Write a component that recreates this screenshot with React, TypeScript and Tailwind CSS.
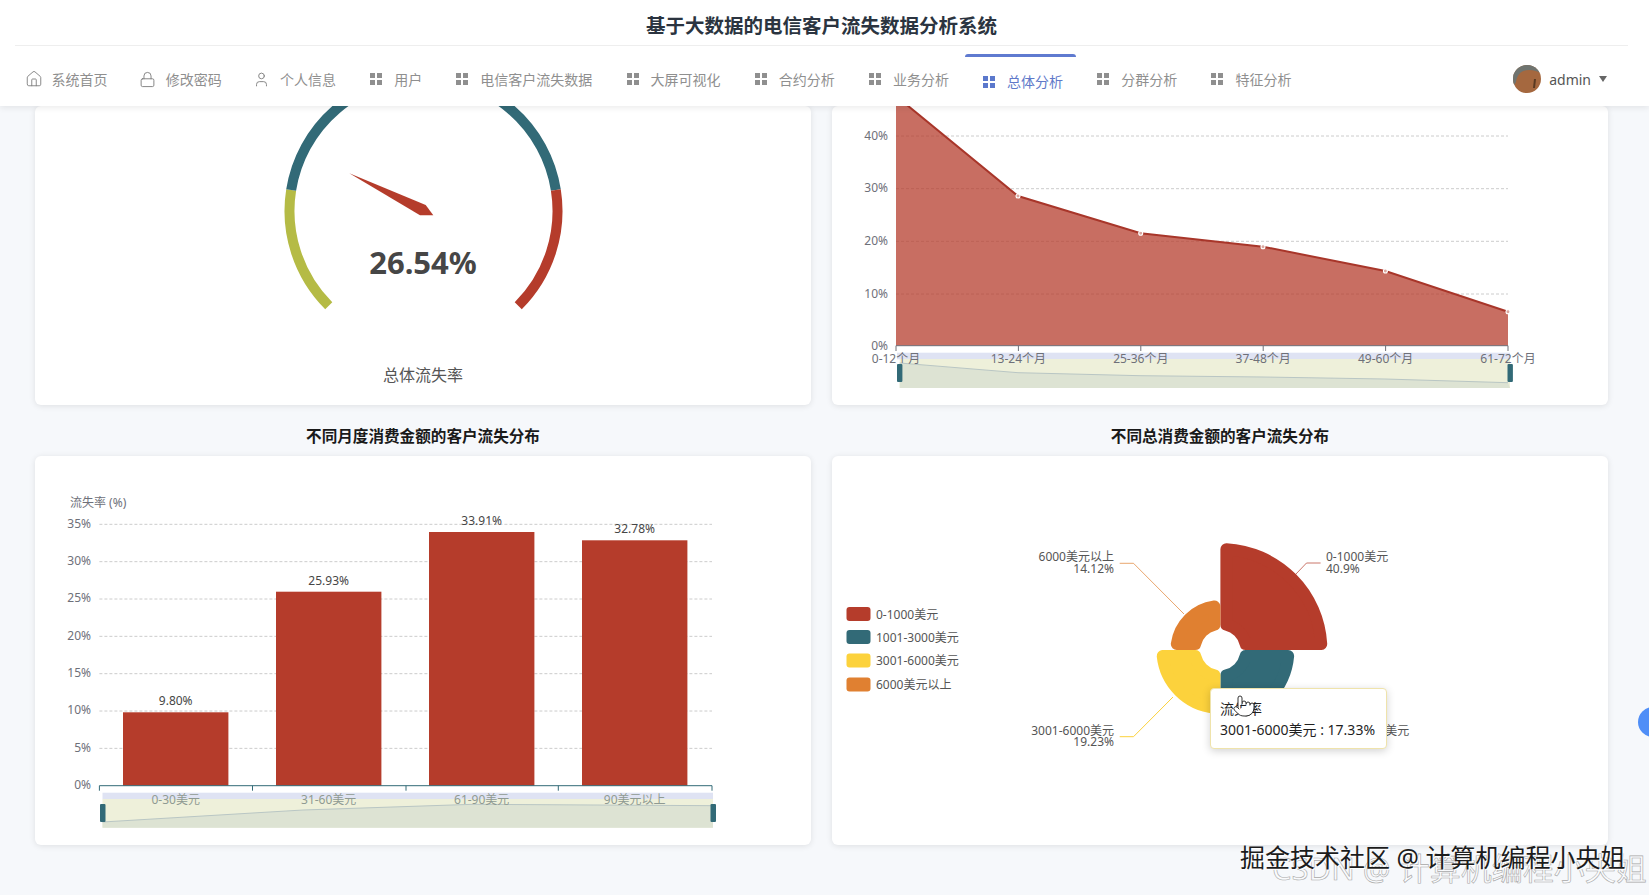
import { Home, Lock, Pointer, User } from "lucide-react";

const FONT = "font-['Noto_Sans','Noto_Sans_CJK_SC',sans-serif]";
const RED = "#b53c2b";
const TEAL = "#326a77";
const YELLOW = "#fcd23c";
const ORANGE = "#e08031";

function GridIcon({ color = "#8f8f8f" }: { color?: string }) {
  return (
    <svg width="12" height="12" viewBox="0 0 12 12" fill={color}>
      <rect x="0" y="0" width="5" height="5" />
      <rect x="7" y="0" width="5" height="5" />
      <rect x="0" y="7" width="5" height="5" />
      <rect x="7" y="7" width="5" height="5" />
    </svg>
  );
}

const navItems = [
  { label: "系统首页", icon: "home" },
  { label: "修改密码", icon: "lock" },
  { label: "个人信息", icon: "user" },
  { label: "用户", icon: "grid" },
  { label: "电信客户流失数据", icon: "grid" },
  { label: "大屏可视化", icon: "grid" },
  { label: "合约分析", icon: "grid" },
  { label: "业务分析", icon: "grid" },
  { label: "总体分析", icon: "grid", active: true },
  { label: "分群分析", icon: "grid" },
  { label: "特征分析", icon: "grid" },
];

function NavIcon({ icon, active }: { icon: string; active?: boolean }) {
  if (icon === "home") return <Home size={18} strokeWidth={1.2} color="#7d7d7d" className="shrink-0" />;
  if (icon === "lock") return <Lock size={17} strokeWidth={1.3} color="#7d7d7d" className="shrink-0" />;
  if (icon === "user") return <User size={17} strokeWidth={1.3} color="#7d7d7d" className="shrink-0" />;
  return <GridIcon color={active ? "#5b78cc" : "#8f8f8f"} />;
}

function Header() {
  return (
    <header className="relative z-10 h-[106px] shrink-0 bg-white shadow-[0_2px_6px_rgba(0,0,0,0.08)]">
      <div className="ml-[15px] mr-[21px] flex h-[46px] items-center justify-center border-b border-[#eeeeee] pt-[6px]">
        <h1 className="text-[19.5px] font-bold text-[#2b3440]">基于大数据的电信客户流失数据分析系统</h1>
      </div>
      <nav className="flex h-[60px] pl-[10px] pr-[42px] pt-[8px]">
        {navItems.map((item) => (
          <div
            key={item.label}
            className={`relative flex h-[52px] items-center px-[16.6px] text-[14px] ${
              item.active ? "pt-[3px] text-[#6079c9]" : "pb-[2px] text-[#8f8f8f]"
            }`}
          >
            {item.active && <span className="absolute left-[-1px] top-0 h-[3px] w-[111px] rounded-t-[3px] bg-[#5f7ad0]" />}
            <span className="mr-[11px] flex w-[14px] items-center justify-center">
              <NavIcon icon={item.icon} active={item.active} />
            </span>
            <span>{item.label}</span>
          </div>
        ))}
        <div className="ml-auto flex h-[52px] items-center pb-[2px] text-[14px] text-[#555555]">
          <svg width="28" height="28" viewBox="0 0 28 28" className="mr-[8px]">
            <defs>
              <clipPath id="av">
                <circle cx="14" cy="14" r="14" />
              </clipPath>
            </defs>
            <g clipPath="url(#av)">
              <rect width="28" height="28" fill="#a5683f" />
              <path d="M0 0h28v9c-3-3-7-4-12-4C9 5 4 9 3 17L0 22z" fill="#6f7470" />
              <path d="M21 14l2 0-1 9-2 0z" fill="#5a3a22" />
            </g>
          </svg>
          <span>admin</span>
          <span className="ml-[8px] h-0 w-0 border-x-[4px] border-t-[6px] border-x-transparent border-t-[#666666]" />
        </div>
      </nav>
    </header>
  );
}

function polar(cx: number, cy: number, r: number, deg: number) {
  const a = (deg * Math.PI) / 180;
  return [cx + r * Math.cos(a), cy - r * Math.sin(a)];
}
function arc(cx: number, cy: number, r: number, a1: number, a2: number) {
  const [x1, y1] = polar(cx, cy, r, a1);
  const [x2, y2] = polar(cx, cy, r, a2);
  return `M${x1} ${y1}A${r} ${r} 0 0 1 ${x2} ${y2}`;
}

function Gauge() {
  const cx = 423.5;
  const cy = 211;
  const r = 134;
  return (
    <svg width="776" height="299" viewBox="35 106 776 299" className="block">
      <path d={arc(cx, cy, r, 225, 171)} fill="none" stroke="#b5bb45" strokeWidth="10" />
      <path d={arc(cx, cy, r, 171, 9)} fill="none" stroke={TEAL} strokeWidth="10" />
      <path d={arc(cx, cy, r, 9, -45)} fill="none" stroke={RED} strokeWidth="10" />
      <polygon points="349.3,173.3 425.7,205 433.3,215.3 420,215.3" fill={RED} />
      <text x="423" y="274" textAnchor="middle" className="fill-[#464646] text-[31px] font-bold">
        26.54%
      </text>
      <text x="423" y="381" textAnchor="middle" className="fill-[#555555] text-[16px]">
        总体流失率
      </text>
    </svg>
  );
}

function LineChart() {
  const ticks = [896, 1018.4, 1140.8, 1263.2, 1385.6, 1508];
  const pts = [
    [896, 96],
    [1018, 196],
    [1140.7, 233.3],
    [1263, 246.7],
    [1385.4, 271],
    [1508, 311.7],
  ];
  const line = pts.map((p) => p.join(",")).join(" ");
  const mini = "899.7,363 1018,372.7 1140,375.7 1263,377 1385,379 1508,382.7";
  const labels = ["0-12个月", "13-24个月", "25-36个月", "37-48个月", "49-60个月", "61-72个月"];
  return (
    <svg width="776" height="299" viewBox="832 106 776 299" className="block">
      {[
        [135.5, "40%"],
        [188.2, "30%"],
        [240.8, "20%"],
        [293.5, "10%"],
      ].map(([y, t]) => (
        <g key={t as string}>
          <line x1="896" x2="1508" y1={(y as number) + 0.5} y2={(y as number) + 0.5} stroke="#cccccc" strokeDasharray="3 2" />
          <text x="888" y={(y as number) + 4} textAnchor="end" className="fill-[#6e7079] text-[12px]">
            {t}
          </text>
        </g>
      ))}
      <text x="888" y="349.5" textAnchor="end" className="fill-[#6e7079] text-[12px]">
        0%
      </text>
      <polygon points={`${line} 1508,345.7 896,345.7`} fill={RED} fillOpacity="0.74" />
      <polyline points={line} fill="none" stroke="#a8362a" strokeWidth="2" />
      {pts.slice(1).map(([x, y]) => (
        <circle key={x} cx={x} cy={y} r="2" fill="#d9a79f" stroke="#ffffff" strokeWidth="1.1" />
      ))}
      <line x1="896" x2="1508" y1="345.7" y2="345.7" stroke="#6e7079" />
      {ticks.map((x) => (
        <line key={x} x1={x} x2={x} y1="345.7" y2="351" stroke="#6e7079" />
      ))}
      <rect x="897" y="352.7" width="613" height="6.6" fill="#dfe3f3" />
      <rect x="899.7" y="359" width="610.3" height="29" fill="#eef0da" />
      <polygon points={`${mini} 1510,388 899.7,388`} fill="#dde3d3" />
      <polyline points={mini} fill="none" stroke="#b9c6c4" />
      <rect x="897" y="364" width="5.4" height="18" rx="1" fill={TEAL} />
      <rect x="1507.5" y="364" width="5.4" height="18" rx="1" fill={TEAL} />
      {labels.map((t, i) => (
        <text key={t} x={ticks[i]} y="363" textAnchor="middle" className="fill-[#6e7079] text-[12px]">
          {t}
        </text>
      ))}
    </svg>
  );
}

function BarChart() {
  const y0 = 785.7;
  const step = 37.34;
  const bars = [
    { x: 123, top: 712.3, v: "9.80%", ly: 705, t: "0-30美元" },
    { x: 276, top: 591.7, v: "25.93%", ly: 584.5, t: "31-60美元" },
    { x: 429, top: 532, v: "33.91%", ly: 524.5, t: "61-90美元" },
    { x: 582, top: 540.3, v: "32.78%", ly: 533, t: "90美元以上" },
  ];
  const mini = "102.5,822 303,810 473,804.3 713,805.7";
  return (
    <svg width="776" height="389" viewBox="35 456 776 389" className="block">
      <text x="70" y="506.5" className="fill-[#6e7079] text-[12px]">
        流失率 (%)
      </text>
      {[0, 1, 2, 3, 4, 5, 6, 7].map((i) => {
        const y = y0 - i * step;
        return (
          <g key={i}>
            {i > 0 && <line x1="99.4" x2="712" y1={y} y2={y} stroke="#cccccc" strokeDasharray="3 2" />}
            <text x="91" y={y + 3.4} textAnchor="end" className="fill-[#6e7079] text-[12px]">
              {i * 5}%
            </text>
          </g>
        );
      })}
      {bars.map((b) => (
        <g key={b.t}>
          <rect x={b.x} y={b.top} width="105.4" height={y0 - b.top} fill={RED} />
          <text x={b.x + 52.7} y={b.ly} textAnchor="middle" className="fill-[#464646] text-[12px]">
            {b.v}
          </text>
        </g>
      ))}
      <line x1="99.4" x2="712" y1={y0} y2={y0} stroke={TEAL} />
      {[99.4, 252.5, 406, 558.3, 712].map((x) => (
        <line key={x} x1={x} x2={x} y1={y0} y2={y0 + 5} stroke={TEAL} />
      ))}
      <rect x="102.5" y="792.7" width="610.5" height="6.6" fill="#dfe3f3" />
      <rect x="102.5" y="799" width="610.5" height="28.7" fill="#eef0da" />
      <polygon points={`${mini} 713,827.7 102.5,827.7`} fill="#dde3d3" />
      <polyline points={mini} fill="none" stroke="#b9c6c4" />
      <rect x="100" y="804" width="5.5" height="18" rx="1" fill={TEAL} />
      <rect x="710.5" y="804" width="5.5" height="18" rx="1" fill={TEAL} />
      {bars.map((b) => (
        <text key={b.t} x={b.x + 52.7} y="803.5" textAnchor="middle" className="fill-[#8f9a92] text-[12px]">
          {b.t}
        </text>
      ))}
    </svg>
  );
}

function quad(R: number, r: number, c: number) {
  const a = Math.sqrt((R - c) ** 2 - c ** 2);
  const b = Math.sqrt((r + c) ** 2 - c ** 2);
  return `M${c} ${-a}A${R - c} ${R - c} 0 0 1 ${a} ${-c}L${b} ${-c}A${r + c} ${r + c} 0 0 0 ${c} ${-b}Z`;
}

function RoseChart() {
  const sectors = [
    { R: 107, color: RED, k: 0 },
    { R: 74, color: TEAL, k: 1 },
    { R: 64, color: YELLOW, k: 2 },
    { R: 50, color: ORANGE, k: 3 },
  ];
  const legend = [
    { t: "0-1000美元", c: RED, y: 607 },
    { t: "1001-3000美元", c: TEAL, y: 630 },
    { t: "3001-6000美元", c: YELLOW, y: 653.5 },
    { t: "6000美元以上", c: ORANGE, y: 677.5 },
  ];
  return (
    <svg width="776" height="389" viewBox="832 456 776 389" className="block">
      {legend.map((l) => (
        <g key={l.t}>
          <rect x="846.5" y={l.y} width="24" height="14" rx="3" fill={l.c} />
          <text x="876" y={l.y + 11.5} className="fill-[#555555] text-[12px]">
            {l.t}
          </text>
        </g>
      ))}
      {sectors.map((s) => (
        <path
          key={s.k}
          d={quad(s.R, 20, 6)}
          transform={`translate(1220.4 650) rotate(${s.k * 90})`}
          fill={s.color}
          stroke={s.color}
          strokeWidth="12"
          strokeLinejoin="round"
        />
      ))}
      <polyline points="1119.7,563.3 1133.5,563.3 1184,614" fill="none" stroke={ORANGE} strokeOpacity="0.7" />
      <polyline points="1296,574 1306.5,563 1320.6,563" fill="none" stroke={RED} strokeOpacity="0.7" />
      <polyline points="1173,697 1133.5,736.7 1119.7,736.7" fill="none" stroke={YELLOW} />
      <g className="fill-[#555555] text-[12px]">
        <text x="1114" y="561" textAnchor="end">6000美元以上</text>
        <text x="1114" y="572.5" textAnchor="end">14.12%</text>
        <text x="1326" y="561">0-1000美元</text>
        <text x="1326" y="572.5">40.9%</text>
        <text x="1114" y="734.5" textAnchor="end">3001-6000美元</text>
        <text x="1114" y="746" textAnchor="end">19.23%</text>
        <text x="1326.5" y="734.5">1001-3000美元</text>
      </g>
    </svg>
  );
}

function Card({ children }: { children: React.ReactNode }) {
  return <div className="overflow-hidden rounded-[6px] bg-white shadow-[0_1px_6px_rgba(0,0,0,0.1)]">{children}</div>;
}

function ChartTitle({ children }: { children: React.ReactNode }) {
  return <h2 className="flex h-[51px] items-center justify-center pt-[13px] text-[15.6px] font-bold text-[#1a1a1a]">{children}</h2>;
}

export default function App() {
  return (
    <div className={`relative flex h-[895px] w-[1649px] flex-col overflow-hidden bg-[#f6f8fb] ${FONT}`}>
      <Header />
      <main className="grid grid-cols-[776px_776px] gap-x-[21px] pl-[35px]">
        <Card>
          <Gauge />
        </Card>
        <Card>
          <LineChart />
        </Card>
        <ChartTitle>不同月度消费金额的客户流失分布</ChartTitle>
        <ChartTitle>不同总消费金额的客户流失分布</ChartTitle>
        <Card>
          <BarChart />
        </Card>
        <div className="relative">
          <Card>
            <RoseChart />
          </Card>
          <div className="absolute left-[378px] top-[232px] h-[61px] w-[177px] rounded-[4px] border border-[#efe3ab] bg-white pl-[9px] pt-[9px] text-[14px] leading-[21px] text-[#1f1f1f] shadow-[0_2px_8px_rgba(0,0,0,0.18)]">
            <div>流失率</div>
            <div>3001-6000美元 : 17.33%</div>
            <Pointer size={24} strokeWidth={1} fill="#ffffff" color="#333333" className="absolute left-[21px] top-[5px]" />
          </div>
        </div>
      </main>
      <span className="absolute left-[1644px] top-[707px] h-[30px] w-[30px] -translate-x-[6px] rounded-full bg-[#4f8ef7]" />
      <span className="absolute left-[1272px] top-[848px] whitespace-nowrap text-[31px] leading-[40px] text-white/50 [-webkit-text-stroke:0.6px_#a8a8a8]">
        CSDN @ 计算机编程小央姐
      </span>
      <span className="absolute left-[1240px] top-[841px] whitespace-nowrap text-[25px] leading-[32px] text-[#1c1c1c] [text-shadow:1px_1px_0_#ffffff]">
        掘金技术社区 @ 计算机编程小央姐
      </span>
    </div>
  );
}
